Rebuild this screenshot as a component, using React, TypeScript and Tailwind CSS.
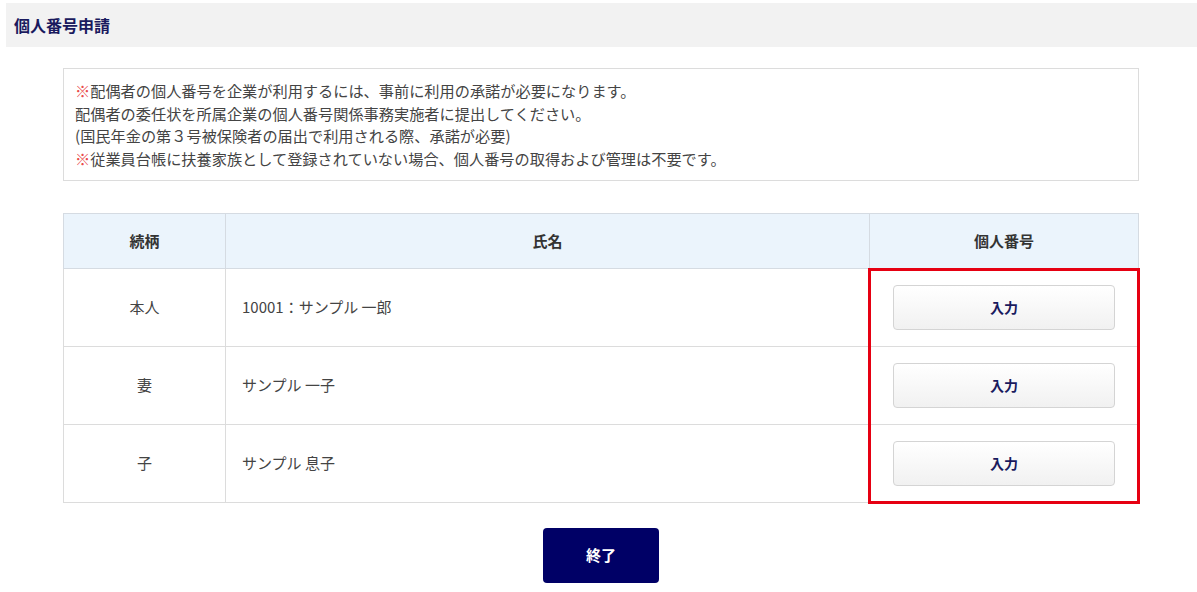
const font = { fontFamily: '"Noto Sans CJK JP", "Noto Sans", sans-serif' };

const rows = [
  { rel: "本人", name: "10001：サンプル 一郎" },
  { rel: "妻", name: "サンプル 一子" },
  { rel: "子", name: "サンプル 息子" },
];

const InputButton = () => (
  <button className="w-[222px] h-[45px] rounded-[4px] border border-[#d4d4d4] bg-gradient-to-b from-white to-[#f1f1f1] text-[14px] font-bold text-[#1a1a5e]">
    入力
  </button>
);

export default function App() {
  return (
    <div className="w-[1197px] h-[592px] bg-white text-[#333] overflow-hidden" style={font}>
      <div className="pt-[3px] pl-[6px]">
        <div className="h-[44px] bg-[#f2f2f2] flex items-center pl-[8px]">
          <h1 className="text-[16px] font-bold text-[#1a1a5e]">個人番号申請</h1>
        </div>
      </div>

      <div className="mx-[63px] w-[1076px]">
        <div className="mt-[21px] border border-[#dcdcdc] px-[11px] py-[10px] text-[15.2px] leading-[22.7px] text-[#444]">
          <p><span className="text-[#e94a4a]">※</span>配偶者の個人番号を企業が利用するには、事前に利用の承諾が必要になります。</p>
          <p>配偶者の委任状を所属企業の個人番号関係事務実施者に提出してください。</p>
          <p>(国民年金の第３号被保険者の届出で利用される際、承諾が必要)</p>
          <p><span className="text-[#e94a4a]">※</span>従業員台帳に扶養家族として登録されていない場合、個人番号の取得および管理は不要です。</p>
        </div>

        <div className="relative mt-[32px]">
          <table className="w-full border-collapse text-[15px]">
            <thead>
              <tr className="h-[55px] bg-[#ebf4fc]">
                <th className="w-[162px] border border-[#d5dbe2] font-bold text-[#333]">続柄</th>
                <th className="border border-[#d5dbe2] font-bold text-[#333]">氏名</th>
                <th className="w-[269px] border border-[#d5dbe2] font-bold text-[#333]">個人番号</th>
              </tr>
            </thead>
            <tbody>
              {rows.map((r) => (
                <tr key={r.rel} className="h-[78px]">
                  <td className="border border-[#dcdcdc] text-center text-[#444]">{r.rel}</td>
                  <td className="border border-[#dcdcdc] pl-[16px] text-[#444]">{r.name}</td>
                  <td className="border border-[#dcdcdc] text-center">
                    <InputButton />
                  </td>
                </tr>
              ))}
            </tbody>
          </table>
          <div className="absolute left-[805px] top-[55px] w-[272px] h-[236px] border-[3px] border-[#e60012] pointer-events-none" />
        </div>

        <div className="flex justify-center mt-[25px]">
          <button className="w-[116px] h-[55px] rounded-[4px] bg-[#000066] text-white text-[15px] font-bold">
            終了
          </button>
        </div>
      </div>
    </div>
  );
}
